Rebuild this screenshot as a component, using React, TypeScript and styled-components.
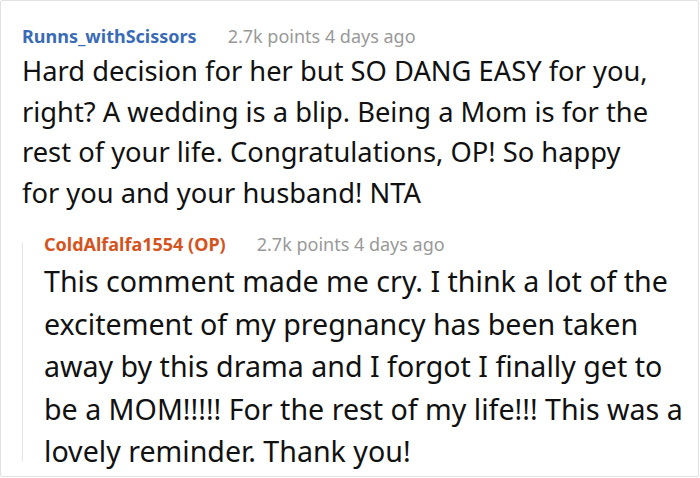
import React from "react";
import styled, { createGlobalStyle } from "styled-components";

const Global = createGlobalStyle`
  html, body { margin: 0; padding: 0; background: #fff; }
  body { font-family: "Noto Sans", "Open Sans", sans-serif; }
`;

const Card = styled.div`
  box-sizing: border-box;
  width: 699px;
  height: 477px;
  border: 1px solid #e2e2e2;
  border-radius: 2px;
  padding: 20px 3px 0 21px;
  overflow: hidden;
`;

const Header = styled.div`
  display: flex;
  align-items: baseline;
  gap: 31px;
  line-height: 30px;
`;

const User = styled.span<{ $op?: boolean }>`
  font-weight: 700;
  font-size: 18px;
  color: ${(p) => (p.$op ? "#d4541e" : "#3a6bb6")};
`;

const Meta = styled.span`
  font-size: 18px;
  color: #999;
`;

const Body = styled.p<{ $size: number; $lh: number; $top?: number; $max?: number }>`
  margin: ${(p) => p.$top ?? 0}px 0 0;
  max-width: ${(p) => (p.$max ? `${p.$max}px` : "none")};
  color: #111;
  font-size: ${(p) => p.$size}px;
  line-height: ${(p) => p.$lh}px;
`;

const Reply = styled.div`
  position: relative;
  margin-top: 16px;
  padding-left: 22px;

  &::before {
    content: "";
    position: absolute;
    left: 0;
    top: 14px;
    bottom: 12px;
    width: 1px;
    background: #e4e4e4;
  }
`;

export default function App() {
  return (
    <>
      <Global />
      <Card>
        <Header>
          <User>Runns_withScissors</User>
          <Meta>2.7k points 4 days ago</Meta>
        </Header>
        <Body $size={27.3} $lh={40.5} $max={632}>
          Hard decision for her but SO DANG EASY for you, right? A wedding is a blip. Being a Mom is for the rest of
          your life. Congratulations, OP! So happy for you and your husband! NTA
        </Body>
        <Reply>
          <Header>
            <User $op>ColdAlfalfa1554 (OP)</User>
            <Meta>2.7k points 4 days ago</Meta>
          </Header>
          <Body $size={28.6} $lh={42.5} $top={1}>
            This comment made me cry. I think a lot of the excitement of my pregnancy has been taken away by this
            drama and I forgot I finally get to be a MOM!!!!! For the rest of my life!!! This was a lovely reminder.
            Thank you!
          </Body>
        </Reply>
      </Card>
    </>
  );
}
